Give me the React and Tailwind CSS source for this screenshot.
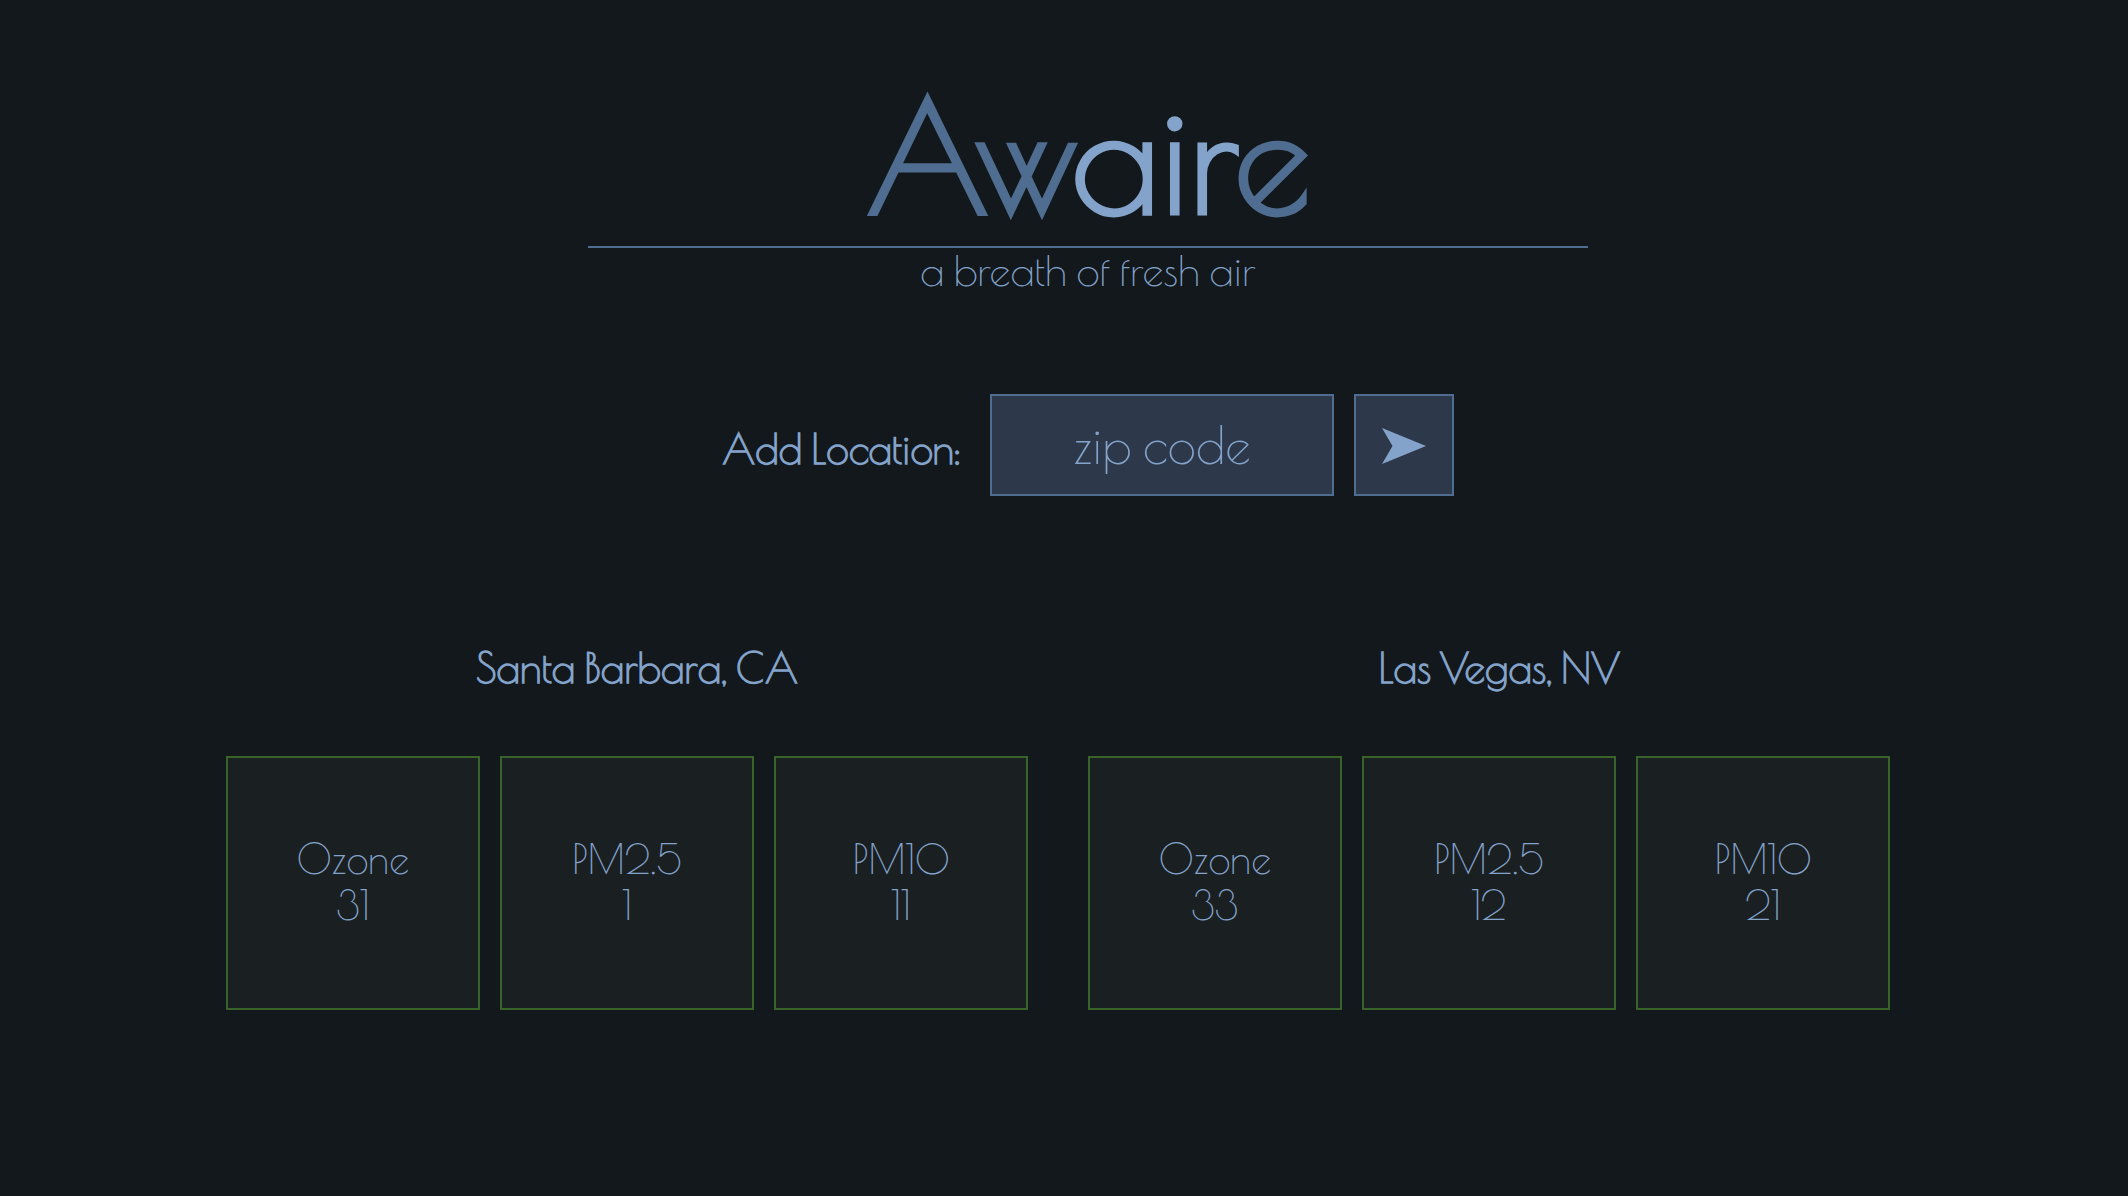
const locations = [
  {
    name: 'Santa Barbara, CA',
    readings: [
      { label: 'Ozone', value: 31 },
      { label: 'PM2.5', value: 1 },
      { label: 'PM10', value: 11 },
    ],
  },
  {
    name: 'Las Vegas, NV',
    readings: [
      { label: 'Ozone', value: 33 },
      { label: 'PM2.5', value: 12 },
      { label: 'PM10', value: 21 },
    ],
  },
];

function Header() {
  return (
    <header className="flex w-full flex-col items-center text-center">
      <h1 className="text-[152px] leading-[160px] font-bold text-[#4f6d90]">
        Aw<span className="text-[#84a3cb]">air</span>e
      </h1>
      <p className="mt-2.5 w-full max-w-[1000px] border-t-2 border-[#4f6d90] text-[42px] leading-[46px]">
        a breath of fresh air
      </p>
    </header>
  );
}

function AddLocation() {
  return (
    <form
      className="mt-[100px] flex flex-wrap items-center justify-center gap-5"
      onSubmit={(event) => event.preventDefault()}
    >
      <label htmlFor="zip" className="mr-2.5 pt-2 text-[41px] leading-[48px] font-bold">
        Add Location:
      </label>
      <input
        id="zip"
        type="text"
        placeholder="zip code"
        className="h-[102px] w-[344px] border-2 border-[#4f6d90] bg-[#2d394a] text-center text-[51px] outline-none placeholder:text-[#84a3cb] placeholder:opacity-100"
      />
      <button
        type="submit"
        aria-label="Add location"
        className="flex h-[102px] w-[100px] items-center justify-center border-2 border-[#4f6d90] bg-[#2d394a]"
      >
        <svg className="mt-0.5 h-9 w-11" viewBox="0 0 44 36" fill="currentColor" aria-hidden="true">
          <path d="M0 0 L44 18 L0 36 L10.5 18 Z" />
        </svg>
      </button>
    </form>
  );
}

function Reading({ label, value }) {
  return (
    <li className="flex size-[254px] flex-col items-center justify-center border-2 border-[#386329] bg-[#1a1f22] pb-0.5 text-[40px] leading-[46px]">
      <span>{label}</span>
      <span>{value}</span>
    </li>
  );
}

function Location({ name, readings }) {
  return (
    <section className="mr-10 flex flex-col items-center">
      <h2 className="text-[41px] leading-[48px] font-bold">{name}</h2>
      <ul className="mt-16 flex flex-wrap justify-center gap-5 pr-5">
        {readings.map((reading) => (
          <Reading key={reading.label} {...reading} />
        ))}
      </ul>
    </section>
  );
}

export default function App() {
  return (
    <div className="flex min-h-screen flex-col items-center bg-[#12181b] pt-[76px] pb-16 pl-12 font-['Poiret_One',Lato,sans-serif] text-[#84a3cb]">
      <Header />
      <AddLocation />
      <main className="mt-[148px] flex flex-wrap justify-center gap-y-16">
        {locations.map((location) => (
          <Location key={location.name} {...location} />
        ))}
      </main>
    </div>
  );
}
